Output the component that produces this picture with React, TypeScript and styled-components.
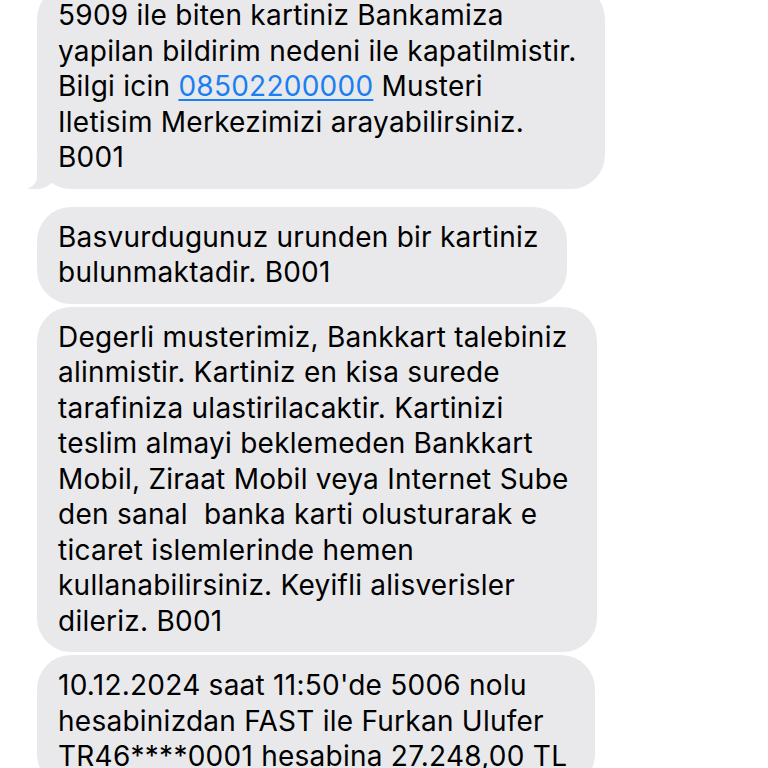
import React from "react";
import styled, { createGlobalStyle } from "styled-components";

const GlobalStyle = createGlobalStyle`
  html, body {
    margin: 0;
    padding: 0;
    background: #ffffff;
    overflow: hidden;
  }
  body {
    font-family: Inter, "Noto Sans", "Liberation Sans", sans-serif;
    -webkit-font-smoothing: antialiased;
  }
`;

const Screen = styled.div`
  width: 768px;
  height: 768px;
  overflow: hidden;
  background: #ffffff;
`;

const Thread = styled.div`
  display: flex;
  flex-direction: column;
  align-items: flex-start;
  margin-top: -15px;
  padding-left: 37px;
`;

const Bubble = styled.div<{ $tail?: boolean; $gap?: number }>`
  position: relative;
  box-sizing: border-box;
  width: fit-content;
  margin-top: ${(p) => p.$gap ?? 0}px;
  padding: 13px 28px 13px 21px;
  background: #e9e9eb;
  border-radius: 34px;
  color: #000000;
  font-size: 28px;
  letter-spacing: 0.25px;
  line-height: 35.5px;
  white-space: pre;

  ${(p) =>
    p.$tail &&
    `
    &::before {
      content: "";
      position: absolute;
      left: -9px;
      bottom: 0;
      width: 28px;
      height: 30px;
      background: #e9e9eb;
      border-bottom-right-radius: 20px 16px;
    }
    &::after {
      content: "";
      position: absolute;
      left: -30px;
      bottom: 0;
      width: 30px;
      height: 30px;
      background: #ffffff;
      border-bottom-right-radius: 14px 12px;
    }
  `}
`;

const Text = styled.span`
  position: relative;
  z-index: 1;
`;

const Link = styled.span`
  color: #1a7ff2;
  text-decoration: underline;
  text-decoration-thickness: 2px;
  text-underline-offset: 3px;
`;

export default function App() {
  return (
    <Screen>
      <GlobalStyle />
      <Thread>
        <Bubble $tail>
          <Text>
            {"5909 ile biten kartiniz Bankamiza\nyapilan bildirim nedeni ile kapatilmistir.\nBilgi icin "}
            <Link>08502200000</Link>
            {" Musteri\nIletisim Merkezimizi arayabilirsiniz.\nB001"}
          </Text>
        </Bubble>
        <Bubble $gap={18}>
          <Text>{"Basvurdugunuz urunden bir kartiniz\nbulunmaktadir. B001"}</Text>
        </Bubble>
        <Bubble $gap={3}>
          <Text>
            {"Degerli musterimiz, Bankkart talebiniz\nalinmistir. Kartiniz en kisa surede\ntarafiniza ulastirilacaktir. Kartinizi\nteslim almayi beklemeden Bankkart\nMobil, Ziraat Mobil veya Internet Sube\nden sanal  banka karti olusturarak e\nticaret islemlerinde hemen\nkullanabilirsiniz. Keyifli alisverisler\ndileriz. B001"}
          </Text>
        </Bubble>
        <Bubble $gap={3}>
          <Text>
            {"10.12.2024 saat 11:50'de 5006 nolu\nhesabinizdan FAST ile Furkan Ulufer\nTR46****0001 hesabina 27.248,00 TL"}
          </Text>
        </Bubble>
      </Thread>
    </Screen>
  );
}
